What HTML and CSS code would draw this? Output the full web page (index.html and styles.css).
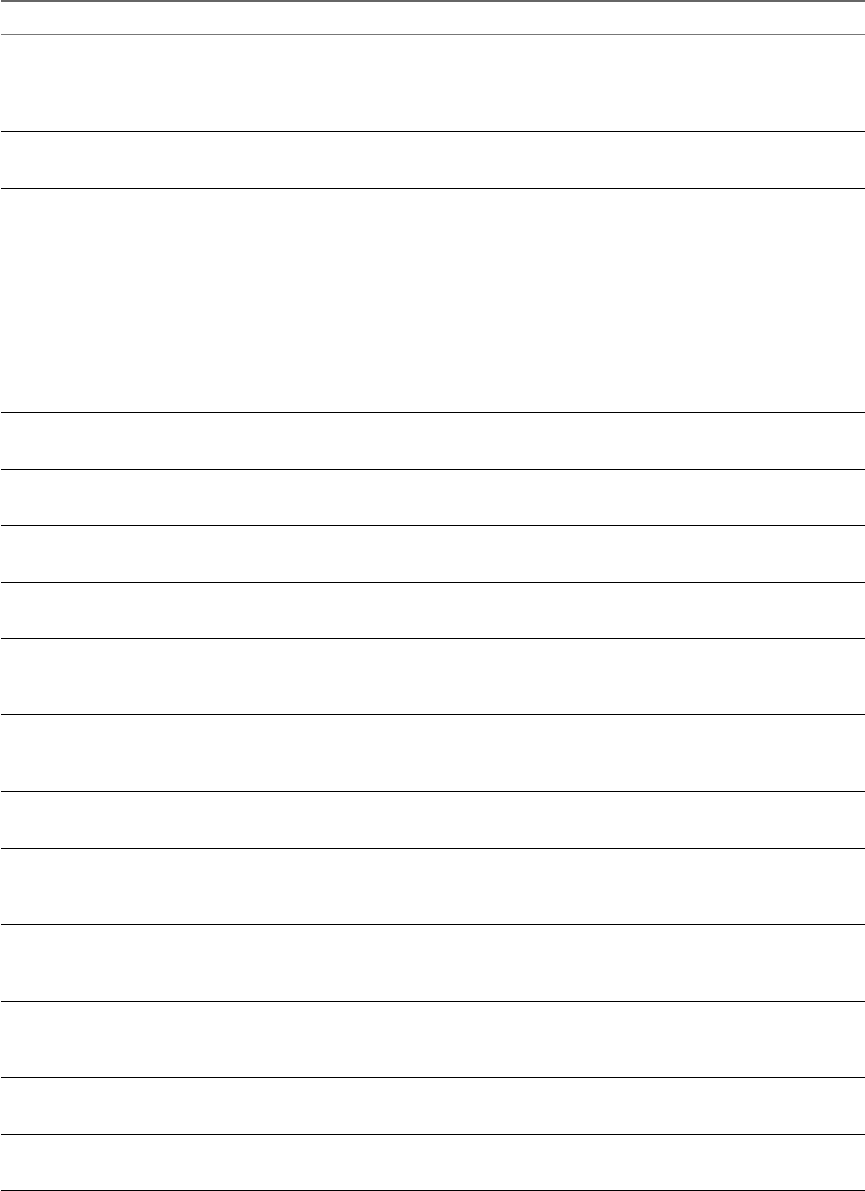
FILE: index.html
```html
<!DOCTYPE html>
<html lang="en">
<head>
<meta charset="utf-8">
<title>Table</title>
<link rel="stylesheet" href="styles.css">
</head>
<body>
<div class="table">
  <div class="thead"></div>
  <div class="row r96"></div>
  <div class="row r56"></div>
  <div class="row r223"></div>
  <div class="row r56"></div>
  <div class="row r55"></div>
  <div class="row r56"></div>
  <div class="row r55"></div>
  <div class="row r75"></div>
  <div class="row r76"></div>
  <div class="row r56"></div>
  <div class="row r75"></div>
  <div class="row r76"></div>
  <div class="row r75"></div>
  <div class="row r56"></div>
  <div class="row r55"></div>
</div>
</body>
</html>
```

FILE: styles.css
```css
html, body {
  margin: 0;
  padding: 0;
  background: #ffffff;
  font-family: "Liberation Sans", Arial, sans-serif;
}
.table {
  display: flex;
  flex-direction: column;
  margin-left: 1px;
}
.thead {
  height: 32px;
  border-top: 2px solid #666666;
  border-bottom: 1px solid #777777;
}
.row {
  border-bottom: 1px solid #000000;
}
.r55 { height: 55px; }
.r56 { height: 56px; }
.r75 { height: 75px; }
.r76 { height: 76px; }
.r96 { height: 96px; }
.r223 { height: 223px; }
```
